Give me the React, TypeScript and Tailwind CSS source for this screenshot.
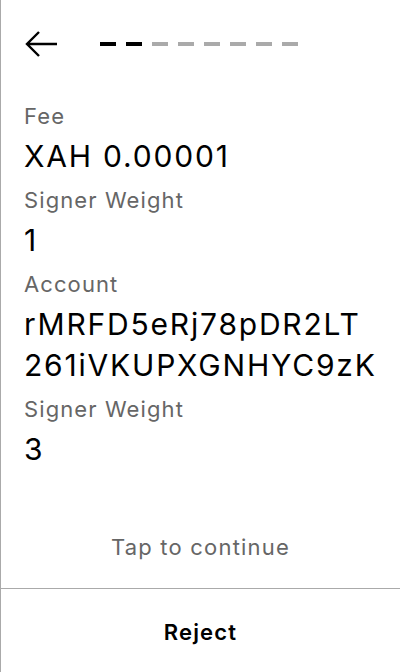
import { ReactNode } from "react";

const font = { fontFamily: "Inter, 'Noto Sans', sans-serif" };

function Label({ children }: { children: ReactNode }) {
    return (
        <div className="text-[22px] leading-[40px] tracking-[1.1px] text-[#666666]">{children}</div>
    );
}

function Value({ children }: { children: ReactNode }) {
    return (
        <div className="text-[30px] leading-[41px] tracking-[1.8px] text-black mb-[3px]">
            {children}
        </div>
    );
}

export default function App() {
    const steps = [true, true, false, false, false, false, false, false];

    return (
        <div
            className="w-[400px] h-[672px] bg-white border-l border-[#aaaaaa] flex flex-col"
            style={font}
        >
            {/* ヘッダー */}
            <div className="flex items-center h-[40px] mt-[24px] pl-[23px]">
                <svg width="34" height="28" viewBox="0 0 34 28" fill="none">
                    <path
                        d="M33 14H3M15 2L3 14L15 26"
                        stroke="black"
                        strokeWidth="2.4"
                    />
                </svg>
                <div className="flex gap-[10px] ml-[42px]">
                    {steps.map((done, i) => (
                        <div
                            key={i}
                            className={done ? "w-[16px] h-[4px] bg-black" : "w-[16px] h-[4px] bg-[#aaaaaa]"}
                        />
                    ))}
                </div>
            </div>

            {/* 明細 */}
            <div className="flex-1 pl-[23px] pr-[24px] pt-[32px]">
                <Label>Fee</Label>
                <Value>XAH 0.00001</Value>
                <Label>Signer Weight</Label>
                <Value>1</Value>
                <Label>Account</Label>
                <Value>
                    rMRFD5eRj78pDR2LT<wbr />261iVKUPXGNHYC9zK
                </Value>
                <Label>Signer Weight</Label>
                <Value>3</Value>
            </div>

            <div className="text-center text-[22px] tracking-[1.2px] text-[#666666] leading-[28px] mb-[27px]">
                Tap to continue
            </div>

            <div className="border-t border-[#aaaaaa] h-[84px] pt-[4px] flex items-center justify-center">
                <span className="text-[22px] tracking-[1.2px] font-semibold text-black">Reject</span>
            </div>
        </div>
    );
}
